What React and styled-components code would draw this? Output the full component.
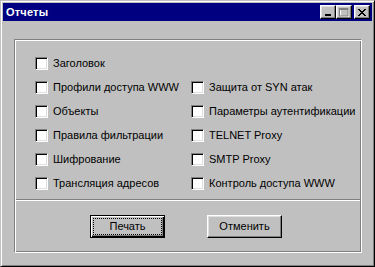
import React from 'react';
import styled, { createGlobalStyle } from 'styled-components';

const GlobalStyle = createGlobalStyle`
  html, body {
    margin: 0;
    padding: 0;
    background: #c0c0c0;
  }
  * {
    box-sizing: border-box;
  }
`;

const leftItems = [
  'Заголовок',
  'Профили доступа WWW',
  'Объекты',
  'Правила фильтрации',
  'Шифрование',
  'Трансляция адресов',
];

const rightItems = [
  'Защита от SYN атак',
  'Параметры аутентификации',
  'TELNET Proxy',
  'SMTP Proxy',
  'Контроль доступа WWW',
];

const Window = styled.div`
  width: 375px;
  height: 267px;
  background: #c0c0c0;
  border: 1px solid;
  border-color: #c0c0c0 #000 #000 #c0c0c0;
  box-shadow: inset 1px 1px #fff, inset -1px -1px #808080;
  padding: 2px;
  display: flex;
  flex-direction: column;
  font-family: 'Liberation Sans', Arial, sans-serif;
  font-size: 11px;
  color: #000;
`;

const TitleBar = styled.div`
  height: 18px;
  background: #000080;
  display: flex;
  align-items: center;
  padding: 0 2px 0 3px;
`;

const Title = styled.div`
  flex: 1;
  color: #fff;
  font-weight: bold;
  font-size: 11px;
  letter-spacing: 0.2px;
`;

const TitleButton = styled.div`
  width: 16px;
  height: 14px;
  background: #c0c0c0;
  border: 1px solid;
  border-color: #fff #000 #000 #fff;
  box-shadow: inset -1px -1px #808080, inset 1px 1px #dfdfdf;
  margin-left: ${(p) => (p.$gap ? '2px' : '0')};
  display: flex;
  align-items: center;
  justify-content: center;
`;

const Body = styled.div`
  flex: 1;
  padding: 18px 10px 11px 11px;
  display: flex;
`;

const Frame = styled.div`
  flex: 1;
  border: 1px solid;
  border-color: #808080 #fff #fff #808080;
  box-shadow: inset 1px 1px #fff, inset -1px -1px #808080;
  display: flex;
  flex-direction: column;
`;

const Options = styled.div`
  display: grid;
  grid-template-columns: 156px 1fr;
  grid-template-rows: repeat(6, 24px);
  grid-auto-flow: column;
  padding: 11px 0 0 20px;
  height: 159px;
`;

const Option = styled.label`
  display: flex;
  align-items: center;
  gap: 5px;
  white-space: nowrap;
`;

const Box = styled.span`
  width: 13px;
  height: 13px;
  flex: none;
  background: #fff;
  border: 1px solid;
  border-color: #808080 #fff #fff #808080;
  box-shadow: inset 1px 1px #000, inset -1px -1px #dfdfdf;
`;

const Separator = styled.div`
  height: 2px;
  border-top: 1px solid #808080;
  border-bottom: 1px solid #fff;
  margin: 0 1px;
`;

const Buttons = styled.div`
  flex: 1;
  display: flex;
  align-items: center;
  justify-content: center;
  gap: 42px;
  padding-right: 4px;
`;

const Button = styled.div`
  width: 75px;
  height: 23px;
  background: #c0c0c0;
  border: 1px solid;
  border-color: ${(p) => (p.$default ? '#000' : '#fff #000 #000 #fff')};
  box-shadow: ${(p) =>
    p.$default
      ? 'inset 1px 1px #fff, inset -1px -1px #000, inset -2px -2px #808080'
      : 'inset -1px -1px #808080, inset 1px 1px #dfdfdf'};
  padding: 2px;
  display: flex;
`;

const Caption = styled.span`
  flex: 1;
  display: flex;
  align-items: center;
  justify-content: center;
  border: 1px dotted ${(p) => (p.$focused ? '#000' : 'transparent')};
  padding-bottom: 1px;
`;

const CheckOption = ({ text }) => (
  <Option>
    <Box />
    <span>{text}</span>
  </Option>
);

export default function App() {
  return (
    <>
      <GlobalStyle />
      <Window>
        <TitleBar>
          <Title>Отчеты</Title>
          <TitleButton>
            <svg width="8" height="7" viewBox="0 0 8 7">
              <rect x="1" y="5" width="6" height="2" fill="#000" />
            </svg>
          </TitleButton>
          <TitleButton>
            <svg width="10" height="9" viewBox="0 0 10 9">
              <path d="M1 1h8v7H1z" fill="none" stroke="#fff" strokeWidth="1" transform="translate(0.5 0.5)" />
              <rect x="0" y="0" width="9" height="2" fill="#808080" />
              <path d="M0.5 0.5v7.5h8.5V0.5" fill="none" stroke="#808080" />
            </svg>
          </TitleButton>
          <TitleButton $gap>
            <svg width="8" height="7" viewBox="0 0 8 7">
              <path
                d="M0 0h2v1h1v1h2V1h1V0h2v1H7v1H6v1H5v1h1v1h1v1h1v1H6V6H5V5H3v1H2v1H0V6h1V5h1V4h1V3H2V2H1V1H0z"
                fill="#000"
              />
            </svg>
          </TitleButton>
        </TitleBar>
        <Body>
          <Frame>
            <Options>
              {leftItems.map((t) => (
                <CheckOption key={t} text={t} />
              ))}
              <span />
              {rightItems.map((t) => (
                <CheckOption key={t} text={t} />
              ))}
            </Options>
            <Separator />
            <Buttons>
              <Button $default>
                <Caption $focused>Печать</Caption>
              </Button>
              <Button>
                <Caption>Отменить</Caption>
              </Button>
            </Buttons>
          </Frame>
        </Body>
      </Window>
    </>
  );
}
